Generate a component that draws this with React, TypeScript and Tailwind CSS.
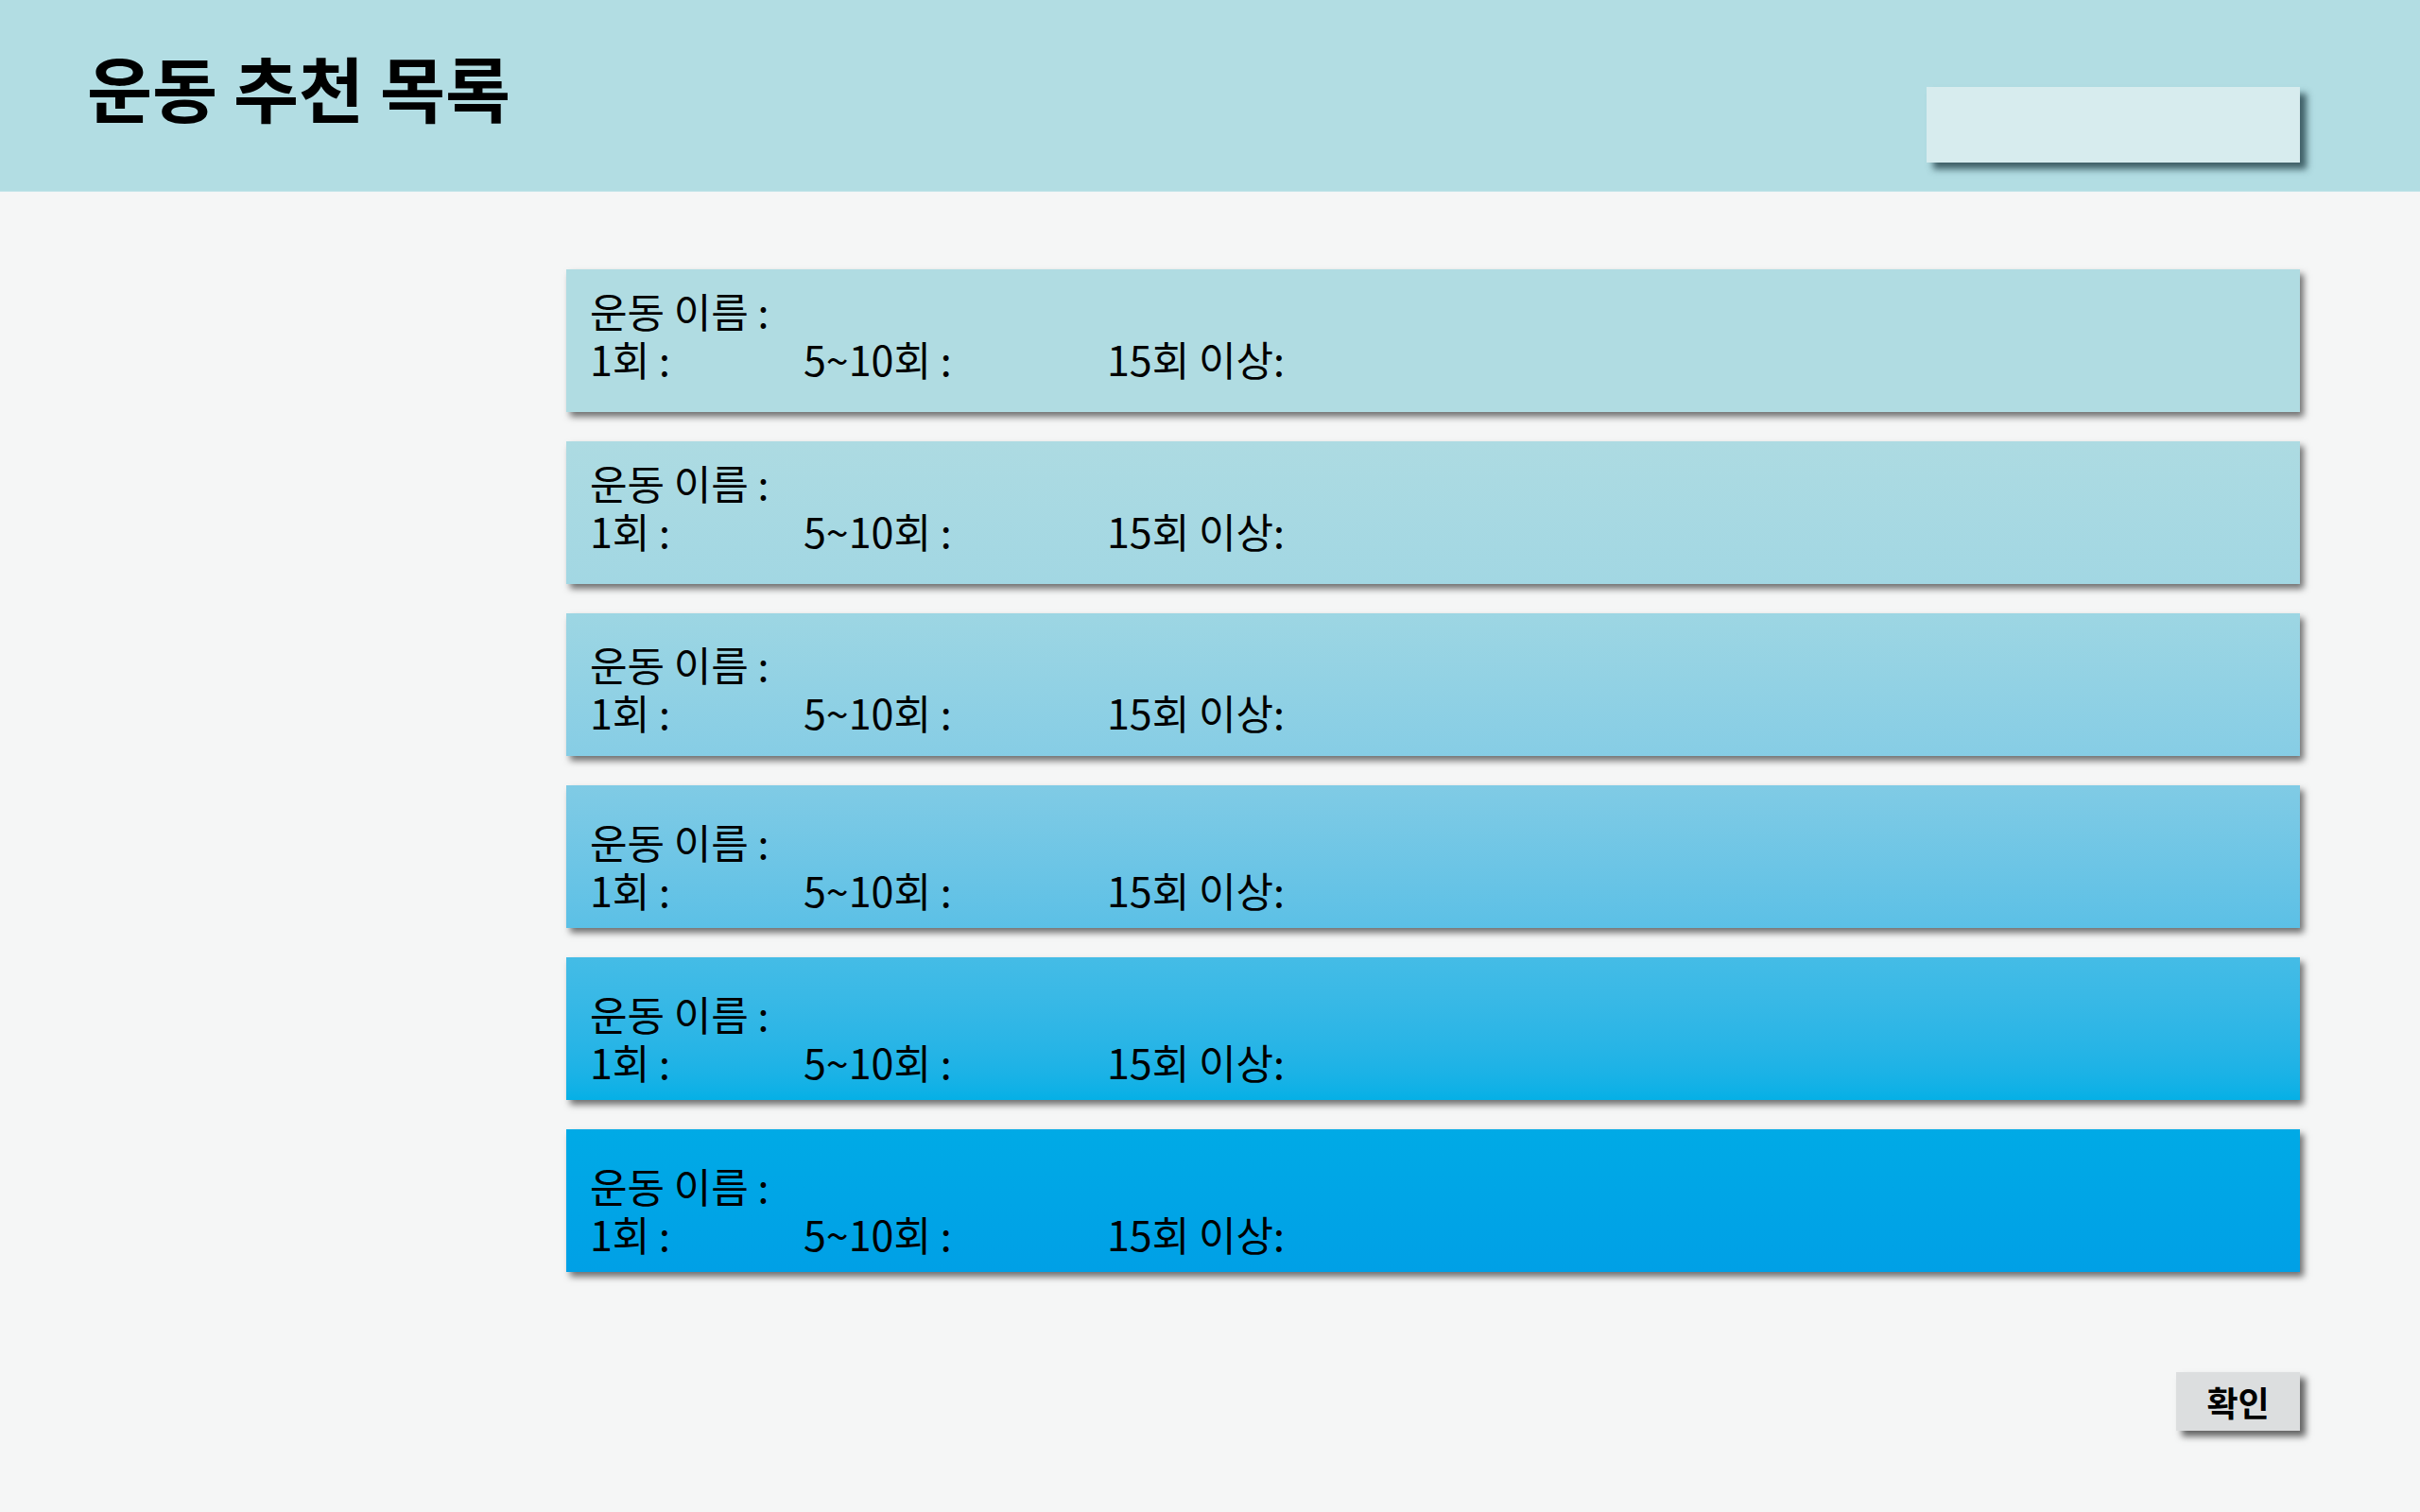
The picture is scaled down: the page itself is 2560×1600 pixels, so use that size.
import React from "react";

const font = { fontFamily: '"Noto Sans CJK KR", "Noto Sans", sans-serif' };

// card colour + text placement, top to bottom
const cards = [
  { bg: "bg-[#b0dce2]", pad: "pt-[18px]" },
  { bg: "bg-linear-to-b from-[#addbe2] to-[#a2d7e3]", pad: "pt-[18px]" },
  { bg: "bg-linear-to-b from-[#9dd6e3] to-[#86cde5]", pad: "pt-[28px]" },
  { bg: "bg-linear-to-b from-[#80cbe5] to-[#5bc0e6]", pad: "pt-[34px]" },
  { bg: "bg-linear-to-b from-[#44bce6] to-[#04b0e6]", pad: "pt-[34px]" },
  { bg: "bg-linear-to-b from-[#00aae6] to-[#00a0e6]", pad: "pt-[34px]" },
];

const ExerciseCard = ({ bg, pad }: any) => {
  return (
    <div
      className={`h-[151px] ${bg} shadow-[4px_5px_7px_rgba(0,0,0,0.55)] pl-[25px] flex flex-col ${pad} text-[43px] leading-[51px] text-black whitespace-nowrap`}
    >
      <div>운동 이름 :</div>
      <div className="flex">
        <div className="w-[226px]">1회 :</div>
        <div className="w-[321px]">5~10회 :</div>
        <div>15회 이상:</div>
      </div>
    </div>
  );
};

export default function App() {
  return (
    <div className="w-[2560px] h-[1600px] bg-[#f5f6f6] flex flex-col" style={font}>
      <header className="h-[203px] bg-[#b2dde3] border-b border-[#c6e6ea] flex justify-between items-start pl-[92px] pr-[127px]">
        <h1 className="pt-[50px] text-[75px] leading-[84px] font-bold text-black whitespace-nowrap">
          운동 추천 목록
        </h1>
        <div className="mt-[92px] w-[395px] h-[80px] bg-[#d7ecee] shadow-[7px_7px_7px_rgba(35,65,72,0.8)]"></div>
      </header>

      <main className="flex flex-col pl-[599px] pr-[127px] pt-[82px]">
        <div className="flex flex-col gap-[31px]">
          {cards.map((c, i) => (
            <ExerciseCard key={i} bg={c.bg} pad={c.pad} />
          ))}
        </div>
        <div className="flex justify-end mt-[106px]">
          <button className="w-[131px] h-[62px] bg-[#dcdedf] shadow-[6px_6px_7px_rgba(0,0,0,0.6)] text-[36px] font-semibold leading-none text-black flex items-center justify-center">
            확인
          </button>
        </div>
      </main>
    </div>
  );
}
